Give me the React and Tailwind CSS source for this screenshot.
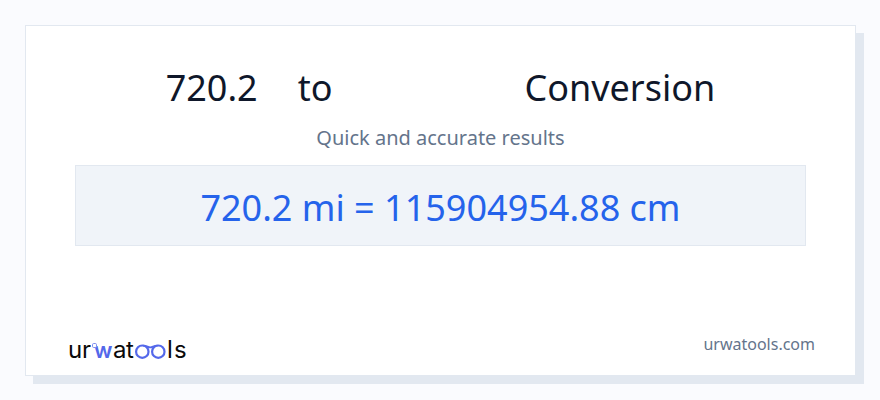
import React from "react";

const conversion = {
  value: "720.2",
  result: "720.2 mi = 115904954.88 cm",
};

const Logo = () => (
  <svg
    viewBox="-4 0 126 36"
    className="w-[126px] h-9 font-['Inter',sans-serif] text-[24px]"
    role="img"
    aria-label="urwatools"
  >
    <g fill="#0a0a0a">
      <text x="-1" y="26">u</text>
      <text x="13" y="26">r</text>
      <text x="44" y="26">a</text>
      <text x="57" y="26">t</text>
      <text x="98" y="26">l</text>
      <text x="105" y="26">s</text>
    </g>
    <text x="25" y="26" fill="#5468ea" className="text-[22px] font-semibold">w</text>

    {/* small ring beside the w */}
    <rect x="23.5" y="11.5" width="4" height="4" rx="1.2" fill="#fff" stroke="#7d8df0" strokeWidth="1" />

    {/* glasses */}
    <g fill="none" stroke="#5468ea" strokeWidth="2.2">
      <circle cx="73.3" cy="19.7" r="6.2" />
      <circle cx="89.3" cy="19.7" r="6.2" />
      <path d="M74 13.6C77.500 13.400 79 15.400 81.300 15.400C83.600 15.400 85 13.400 88.600 13.600" strokeWidth="1.8" />
    </g>
  </svg>
);

const App = () => {
  return (
    <div className="min-h-screen flex bg-[#fafbfe] pt-[25px] pl-[25px] pr-6 pb-6 font-['Noto_Sans',sans-serif]">
      <div className="flex-1 flex flex-col bg-white border border-[#e2e8f0] shadow-[8px_8px_0_0_#e2e8f0]">
        <main className="px-12 pt-[42px] text-center">
          <h1 className="flex justify-center text-4xl text-[#0f172a]">
            <span>{conversion.value}</span>
            <span className="ml-10">to</span>
            <span className="ml-48">Conversion</span>
          </h1>
          <p className="mt-4 text-xl text-[#64748b]">Quick and accurate results</p>
          <div className="mt-[13px] mx-px pt-[22px] pb-[17px] border border-[#e2e8f0] bg-[#f0f4f9] text-4xl text-[#2563eb]">
            {conversion.result}
          </div>
        </main>

        <footer className="mt-auto flex items-start justify-between pl-[39px] pr-10 pb-[7px]">
          <Logo />
          <a href="#" className="text-base text-[#64748b]">urwatools.com</a>
        </footer>
      </div>
    </div>
  );
};

export default App;
